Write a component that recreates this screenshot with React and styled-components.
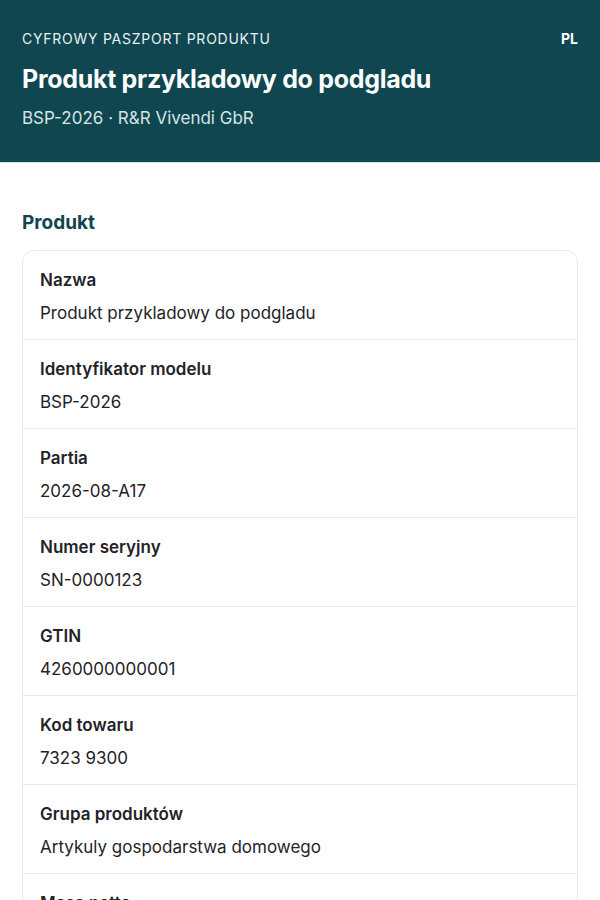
import React from "react";
import styled, { createGlobalStyle } from "styled-components";

const Global = createGlobalStyle`
  html, body { margin: 0; padding: 0; background: #ffffff; }
  body { font-family: Inter, "Noto Sans", sans-serif; color: #1f2328; -webkit-font-smoothing: antialiased; }
  * { box-sizing: border-box; }
`;

const Header = styled.header`
  background: #0f4650;
  color: #ffffff;
  padding: 30px 22px 32px;
  border-bottom: 1px solid #d6e4e3;
`;

const TopRow = styled.div`
  display: flex;
  justify-content: space-between;
  align-items: center;
`;

const Eyebrow = styled.div`
  font-size: 14px;
  letter-spacing: 0.75px;
  text-transform: uppercase;
  color: #e8f1f1;
`;

const Lang = styled.div`
  font-size: 14px;
  font-weight: 700;
`;

const Title = styled.h1`
  margin: 16px 0 0;
  font-size: 25px;
  font-weight: 700;
  letter-spacing: -0.3px;
  line-height: 32px;
`;

const Subtitle = styled.div`
  margin-top: 11px;
  font-size: 17px;
  color: #d5e4e4;
  line-height: 24px;
`;

const Main = styled.main`
  padding: 47px 22px 24px;
`;

const SectionTitle = styled.h2`
  margin: 0 0 14px;
  font-size: 19px;
  font-weight: 700;
  color: #0f4650;
  line-height: 26px;
`;

const Card = styled.div`
  border: 1px solid #e6e8ea;
  border-radius: 12px;
  overflow: hidden;
`;

const Row = styled.div`
  padding: 17px 17px 14px;
  border-top: 1px solid #e6e8ea;
  &:first-child { border-top: none; }
  display: flex;
  flex-direction: column;
  gap: 9px;
`;

const Label = styled.div`
  font-size: 17px;
  font-weight: 600;
  line-height: 24px;
  color: #1f2328;
`;

const Value = styled.div`
  font-size: 17px;
  line-height: 24px;
  color: #1f2328;
`;

const rows = [
  ["Nazwa", "Produkt przykladowy do podgladu"],
  ["Identyfikator modelu", "BSP-2026"],
  ["Partia", "2026-08-A17"],
  ["Numer seryjny", "SN-0000123"],
  ["GTIN", "4260000000001"],
  ["Kod towaru", "7323 9300"],
  ["Grupa produktów", "Artykuly gospodarstwa domowego"],
  ["Masa netto", "0,45 kg"],
];

export default function App() {
  return (
    <>
      <Global />
      <Header>
        <TopRow>
          <Eyebrow>Cyfrowy paszport produktu</Eyebrow>
          <Lang>PL</Lang>
        </TopRow>
        <Title>Produkt przykladowy do podgladu</Title>
        <Subtitle>BSP-2026 · R&amp;R Vivendi GbR</Subtitle>
      </Header>
      <Main>
        <SectionTitle>Produkt</SectionTitle>
        <Card>
          {rows.map(([l, v]) => (
            <Row key={l}>
              <Label>{l}</Label>
              <Value>{v}</Value>
            </Row>
          ))}
        </Card>
      </Main>
    </>
  );
}
